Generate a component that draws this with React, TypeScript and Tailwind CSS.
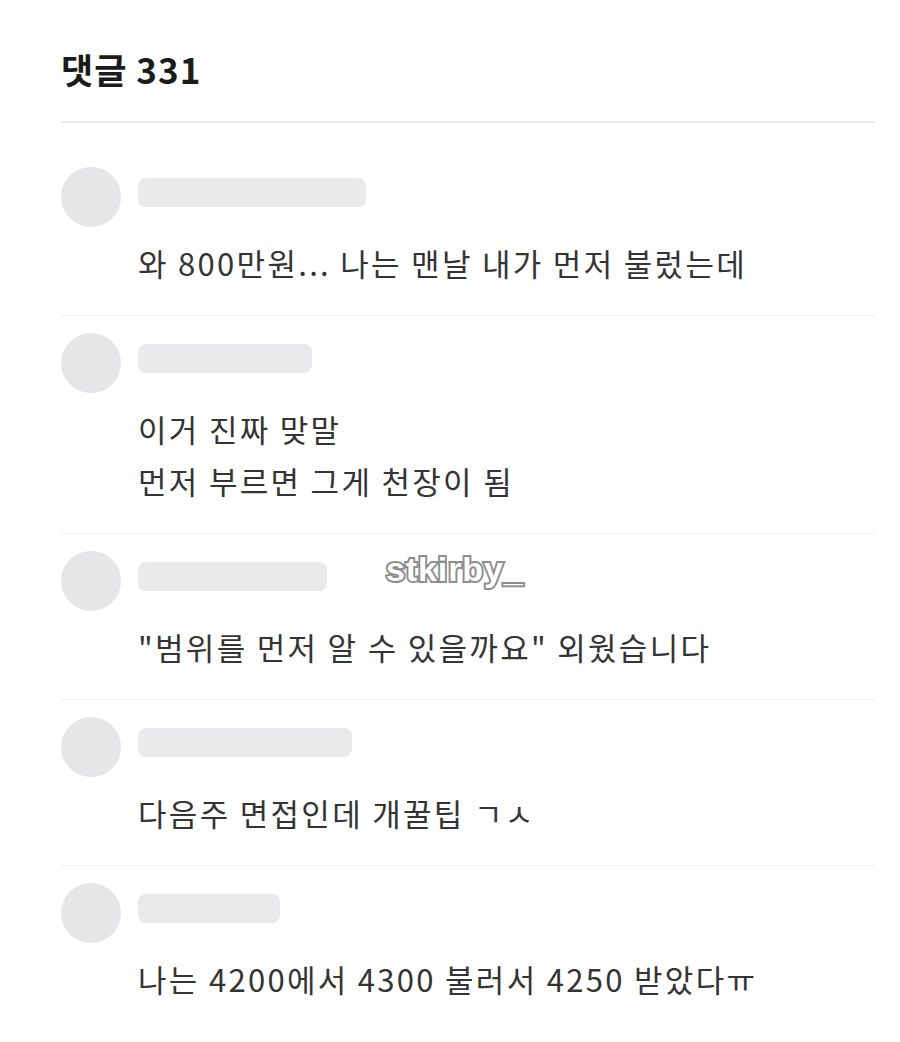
const comments: { id: number; lines: string[] }[] = [
  { id: 1, lines: ['와 800만원... 나는 맨날 내가 먼저 불렀는데'] },
  { id: 2, lines: ['이거 진짜 맞말', '먼저 부르면 그게 천장이 됨'] },
  { id: 3, lines: ['"범위를 먼저 알 수 있을까요" 외웠습니다'] },
  { id: 4, lines: ['다음주 면접인데 개꿀팁 ㄱㅅ'] },
  { id: 5, lines: ['나는 4200에서 4300 불러서 4250 받았다ㅠ'] },
];

// nickname placeholder widths, one per comment
const NAME_WIDTHS: Record<number, string> = {
  1: 'w-[228px]',
  2: 'w-[174px]',
  3: 'w-[189px]',
  4: 'w-[214px]',
  5: 'w-[142px]',
};

const CommentItem = ({ id, lines, first, last }: { id: number; lines: string[]; first: boolean; last: boolean }) => (
  <li className={`${first ? 'pt-[44px]' : 'pt-[17px]'} ${last ? '' : 'border-b border-[#efeff0]'} pb-[26px]`}>
    {/* avatar + masked nickname */}
    <div className="flex h-[60px] items-start gap-[17px]">
      <div className="h-[60px] w-[60px] shrink-0 rounded-full bg-[#e6e6e8]" />
      <div className={`mt-[11px] h-[29px] ${NAME_WIDTHS[id]} rounded-[8px] bg-[#e9e9eb]`} />
    </div>
    <div className="mt-[10px] pl-[77px] text-[31px] leading-[52px] tracking-[2.3px] text-[#343434]">
      {lines.map((line) => (
        <p key={line}>{line}</p>
      ))}
    </div>
  </li>
);

export default function App() {
  return (
    <div className="relative min-h-[1042px] w-[900px] bg-white font-['Noto_Sans_CJK_KR','Noto_Sans',sans-serif]">
      <div className="pl-[61px] pr-[25px]">
        <header className="pt-[48px]">
          <h2 className="text-[35px] font-bold leading-[42px] tracking-[1px] text-[#1c1c1c]">댓글 331</h2>
          <div className="mt-[31px] h-[2px] bg-[#e5e5e6]" />
        </header>

        <ul>
          {comments.map((c, i) => (
            <CommentItem key={c.id} id={c.id} lines={c.lines} first={i === 0} last={i === comments.length - 1} />
          ))}
        </ul>
      </div>

      {/* account watermark */}
      <span className="pointer-events-none absolute left-[386px] top-[552px] font-['Liberation_Sans',sans-serif] text-[34px] font-bold leading-none tracking-[0.9px] text-white [-webkit-text-stroke:4px_#8d8d8d] [paint-order:stroke_fill]">
        stkirby_
      </span>
    </div>
  );
}
